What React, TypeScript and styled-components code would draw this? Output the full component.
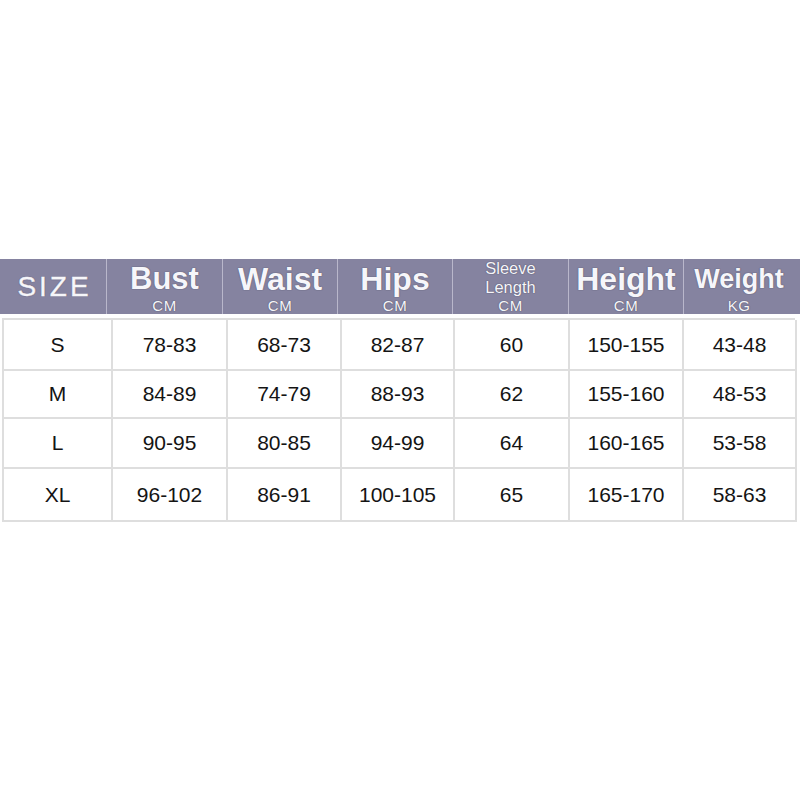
import styled, { createGlobalStyle } from 'styled-components';

const GlobalStyle = createGlobalStyle`
  html, body {
    margin: 0;
    padding: 0;
    background: #ffffff;
  }
  body {
    font-family: 'Liberation Sans', Arial, sans-serif;
  }
`;

const Page = styled.div`
  width: 800px;
  height: 800px;
  padding-top: 259px;
  box-sizing: border-box;
  background: #fff;
`;

const HeaderRow = styled.div`
  display: grid;
  grid-template-columns: 106px 116px 115px 115px 116px 115px 111px;
  height: 55px;
  background: #8583a0;
`;

const HeadCell = styled.div`
  display: flex;
  flex-direction: column;
  align-items: center;
  justify-content: center;
  color: #f6f6fa;
  text-shadow: 0 0 1px rgba(70, 68, 90, 0.8), 0 0 1px rgba(70, 68, 90, 0.5);
  & + & {
    border-left: 1px solid #b9b7cb;
  }
`;

const SizeLabel = styled.span`
  display: block;
  font-size: 28px;
  letter-spacing: 3px;
  line-height: 32px;
  padding-left: 3px;
  -webkit-text-stroke: 0.4px #f6f6fa;
`;

const Label = styled.span<{ $size?: number }>`
  display: block;
  font-size: ${(p) => p.$size ?? 31}px;
  font-weight: 700;
  line-height: 36px;
  margin-top: 2px;
`;

const SmallLabel = styled.span`
  display: block;
  font-size: 16.5px;
  line-height: 19px;
`;

const Unit = styled.span`
  display: block;
  font-size: 15px;
  line-height: 17px;
  letter-spacing: 0.5px;
`;

const Body = styled.div`
  display: grid;
  grid-template-columns: 109px 115px 114px 113px 115px 114px 113px;
  grid-template-rows: 51px 48px 50px 53px;
  margin: 4px 0 0 2px;
  width: 793px;
  border-top: 2px solid #dedede;
  border-left: 2px solid #dedede;
  box-sizing: border-box;
`;

const Cell = styled.div`
  display: flex;
  align-items: center;
  justify-content: center;
  border-right: 2px solid #dedede;
  border-bottom: 2px solid #dedede;
  font-size: 21px;
  color: #141414;
`;

const rows = [
  ['S', '78-83', '68-73', '82-87', '60', '150-155', '43-48'],
  ['M', '84-89', '74-79', '88-93', '62', '155-160', '48-53'],
  ['L', '90-95', '80-85', '94-99', '64', '160-165', '53-58'],
  ['XL', '96-102', '86-91', '100-105', '65', '165-170', '58-63'],
];

export default function App() {
  return (
    <>
      <GlobalStyle />
      <Page>
        <HeaderRow>
          <HeadCell>
            <SizeLabel>SIZE</SizeLabel>
          </HeadCell>
          <HeadCell>
            <Label>Bust</Label>
            <Unit>CM</Unit>
          </HeadCell>
          <HeadCell>
            <Label $size={32}>Waist</Label>
            <Unit>CM</Unit>
          </HeadCell>
          <HeadCell>
            <Label $size={32}>Hips</Label>
            <Unit>CM</Unit>
          </HeadCell>
          <HeadCell>
            <SmallLabel>Sleeve</SmallLabel>
            <SmallLabel>Length</SmallLabel>
            <Unit>CM</Unit>
          </HeadCell>
          <HeadCell>
            <Label $size={32}>Height</Label>
            <Unit>CM</Unit>
          </HeadCell>
          <HeadCell>
            <Label $size={27}>Weight</Label>
            <Unit>KG</Unit>
          </HeadCell>
        </HeaderRow>
        <Body>
          {rows.map((row) =>
            row.map((value, i) => <Cell key={row[0] + i}>{value}</Cell>)
          )}
        </Body>
      </Page>
    </>
  );
}
